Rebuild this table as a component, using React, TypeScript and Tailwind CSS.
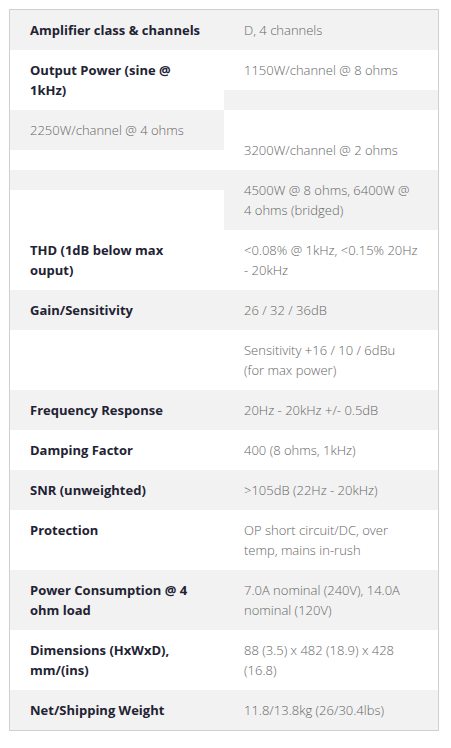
const rows: [string, string, boolean][] = [
  ["THD (1dB below max ouput)", "<0.08% @ 1kHz, <0.15% 20Hz - 20kHz", false],
  ["Gain/Sensitivity", "26 / 32 / 36dB", true],
  ["", "Sensitivity +16 / 10 / 6dBu (for max power)", false],
  ["Frequency Response", "20Hz - 20kHz +/- 0.5dB", true],
  ["Damping Factor", "400 (8 ohms, 1kHz)", false],
  ["SNR (unweighted)", ">105dB (22Hz - 20kHz)", true],
  ["Protection", "OP short circuit/DC, over temp, mains in-rush", false],
  ["Power Consumption @ 4 ohm load", "7.0A nominal (240V), 14.0A nominal (120V)", true],
  ["Dimensions (HxWxD), mm/(ins)", "88 (3.5) x 482 (18.9) x 428 (16.8)", false],
  ["Net/Shipping Weight", "11.8/13.8kg (26/30.4lbs)", true],
];

const label = "px-5 py-[10px] font-bold text-[#222233]";
const value = "px-5 py-[10px] font-light text-[#666666]";

export default function App() {
  return (
    <div className="bg-white min-h-screen pt-[9px] pl-[9px] font-['Open_Sans',sans-serif] text-[13px] leading-5">
      <div className="w-[430px] border border-[#d0d0d0]">
        <div className="grid grid-cols-2 bg-[#f2f2f2]">
          <div className={label}>Amplifier class &amp; channels</div>
          <div className={value}>D, 4 channels</div>
        </div>

        {/* broken output power block */}
        <div className="grid grid-cols-2">
          <div className="flex flex-col">
            <div className={`${label} h-[60px] bg-white`}>Output Power (sine @ 1kHz)</div>
            <div className={`${value} h-[40px] bg-[#f2f2f2]`}>2250W/channel @ 4 ohms</div>
            <div className="h-[20px] bg-white" />
            <div className="h-[20px] bg-[#f2f2f2]" />
            <div className="h-[40px] bg-white" />
          </div>
          <div className="flex flex-col">
            <div className={`${value} h-[40px] bg-white`}>1150W/channel @ 8 ohms</div>
            <div className="h-[20px] bg-[#f2f2f2]" />
            <div className="h-[60px] bg-white px-5 pt-[30px] font-light text-[#666666]">3200W/channel @ 2 ohms</div>
            <div className={`${value} h-[60px] bg-[#f2f2f2]`}>4500W @ 8 ohms, 6400W @ 4 ohms (bridged)</div>
          </div>
        </div>

        {rows.map(([k, v, gray], i) => (
          <div key={i} className={`grid grid-cols-2 ${gray ? "bg-[#f2f2f2]" : "bg-white"}`}>
            <div className={label}>{k}</div>
            <div className={value}>{v}</div>
          </div>
        ))}
      </div>
    </div>
  );
}
